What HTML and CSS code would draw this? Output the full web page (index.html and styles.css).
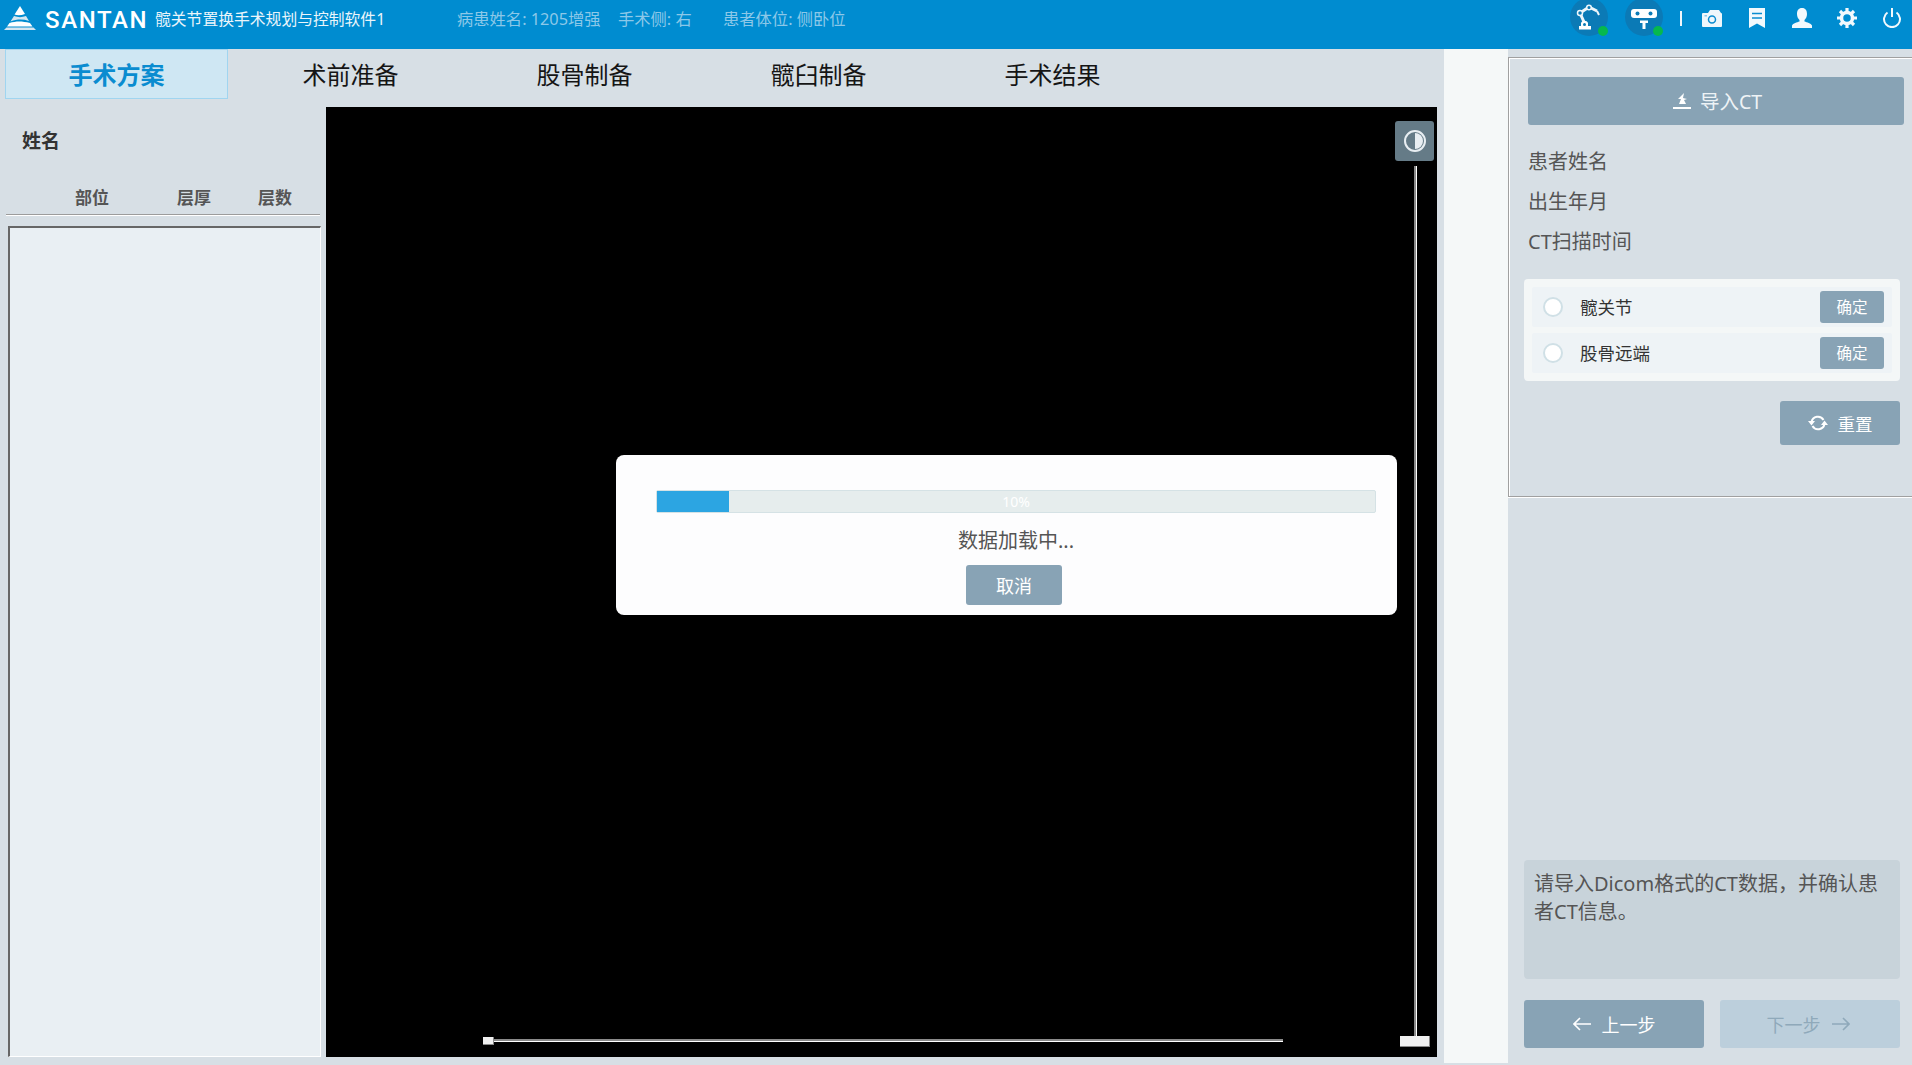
FILE: index.html
```html
<!DOCTYPE html>
<html lang="zh-CN">
<head>
    <meta charset="UTF-8">
    <title>髋关节置换手术规划与控制软件</title>
    <link rel="stylesheet" href="styles.css">
</head>
<body>
<header class="topbar">
    <svg class="logo" viewBox="0 0 32 24">
        <path fill="#fff" d="M16 0 21 8C17 9.500 13 9.500 10.500 8.500Z"/>
        <path fill="#d5e6f0" d="M10 10C14 11.500 18 11.500 22 10L25 15C19 13 13 13 6.500 15.500Z"/>
        <path fill="#fff" d="M5.500 17C12 15 18 15 26 17L28.500 20.500 3 20.500Z"/>
        <path fill="#d5e6f0" d="M2.500 21.500H29.500L32 24H0Z"/>
    </svg>
    <span class="brand">SANTAN</span>
    <span class="app-title">髋关节置换手术规划与控制软件1</span>
    <span class="info info-name">病患姓名: 1205增强</span>
    <span class="info info-side">手术侧: 右</span>
    <span class="info info-pose">患者体位: 侧卧位</span>
    <div class="status">
        <div class="status-circle">
            <svg viewBox="0 0 26 26" width="26" height="26">
                <path fill="none" stroke="#eef6fb" stroke-width="3" d="M8 18 4 9 13 3 21 7"/>
                <path fill="none" stroke="#eef6fb" stroke-width="2" d="M21 7 23 11"/>
                <circle cx="4" cy="9" r="2.500" fill="#0b7ab6" stroke="#eef6fb" stroke-width="1.500"/>
                <circle cx="13" cy="3.500" r="2.300" fill="#0b7ab6" stroke="#eef6fb" stroke-width="1.500"/>
                <path fill="#fff" d="M5 19C6 16 11 16 12 19V22H15V25.500H3V22H5Z"/>
                <circle cx="8.500" cy="20.500" r="1.500" fill="#0b7ab6"/>
            </svg>
            <i class="dot"></i>
        </div>
        <div class="status-circle">
            <svg viewBox="0 0 26 26" width="26" height="26">
                <path fill="#fff" d="M3 5H23Q26 5 26 8V11Q26 14 23 14H3Q0 14 0 11V8Q0 5 3 5Z"/>
                <circle cx="6.500" cy="9.500" r="2" fill="#0b7ab6"/>
                <circle cx="19.500" cy="9.500" r="2" fill="#0b7ab6"/>
                <path fill="#fff" d="M9 16.500H17V19H14.500V25H11.500V19H9Z"/>
            </svg>
            <i class="dot"></i>
        </div>
        <i class="divider"></i>
    </div>
    <div class="tools">
        <svg viewBox="0 0 20 17" width="20" height="17">
            <path fill="#eef7fc" d="M1 3H6L8 0H17L19 3Q20 3 20 4V16Q20 17 19 17H1Q0 17 0 16V4Q0 3 1 3Z"/>
            <circle cx="10" cy="9.500" r="3.500" fill="none" stroke="#0b8cd0" stroke-width="1.500"/>
            <rect x="2.500" y="5" width="2.500" height="1.500" fill="#8cc6e8"/>
        </svg>
        <svg viewBox="0 0 20 20" width="20" height="20">
            <path fill="#f2f9fd" d="M2 0H18V20L10 15.500 2 20Z"/>
            <path fill="none" stroke="#0b8cd0" stroke-width="1.600" d="M5 5.500H15M5 10H15"/>
        </svg>
        <svg viewBox="0 0 20 20" width="20" height="20">
            <path fill="#f2f9fd" d="M10 0C13.500 0 15 2.500 15 6C15 8.500 14 10.500 12.500 12V13.500C15 14.500 19 15 20 17.500V20H0V17.500C1 15 5 14.500 7.500 13.500V12C6 10.500 5 8.500 5 6C5 2.500 6.500 0 10 0Z"/>
        </svg>
        <svg viewBox="0 0 20 20" width="20" height="20">
            <circle cx="10" cy="10" r="5.500" fill="none" stroke="#f2f9fd" stroke-width="3.500"/>
            <path fill="none" stroke="#f2f9fd" stroke-width="3.200" d="M10 0V4M10 16V20M0 10H4M16 10H20M3 3 5.800 5.800M14.200 14.200 17 17M17 3 14.200 5.800M5.800 14.200 3 17"/>
        </svg>
        <svg viewBox="0 0 20 20" width="20" height="20">
            <path fill="none" stroke="#f2f9fd" stroke-width="2" d="M5.500 4.500A8 8 0 1 0 14.500 4.500"/>
            <path fill="none" stroke="#f2f9fd" stroke-width="2" d="M10 0V9"/>
        </svg>
    </div>
</header>

<div class="main">
    <div class="workspace">
        <nav class="tabs">
            <a class="tab active">手术方案</a>
            <a class="tab">术前准备</a>
            <a class="tab">股骨制备</a>
            <a class="tab">髋臼制备</a>
            <a class="tab">手术结果</a>
        </nav>
        <div class="work-row">
            <aside class="sidebar">
                <div class="patient-name">姓名</div>
                <div class="series-head">
                    <span class="col-part">部位</span>
                    <span class="col-thick">层厚</span>
                    <span>层数</span>
                </div>
                <div class="series-list"></div>
            </aside>
            <section class="viewer">
                <button class="contrast">
                    <svg viewBox="0 0 24 24" width="24" height="24">
                        <circle cx="12" cy="12" r="10" fill="none" stroke="#e8eef2" stroke-width="2"/>
                        <path fill="#e8eef2" d="M12 4A8 8 0 0 1 12 20Z"/>
                    </svg>
                </button>
                <div class="slider-v"></div>
                <div class="slider-v-handle"></div>
                <div class="slider-h-handle"></div>
                <div class="slider-h"></div>
                <div class="modal">
                    <div class="progress">
                        <div class="progress-fill"></div>
                        <span class="progress-text">10%</span>
                    </div>
                    <div class="modal-text">数据加载中...</div>
                    <button class="btn btn-cancel">取消</button>
                </div>
            </section>
        </div>
    </div>

    <div class="strip"></div>

    <div class="panel">
        <div class="import-box">
            <button class="btn btn-import">
                <svg viewBox="0 0 18 16" width="18" height="16">
                    <path fill="#fff" d="M11 0 5 6 8 6 6 11H13L11 7 14 6 10 5Z"/>
                    <rect y="14" width="18" height="2" fill="#fff"/>
                </svg>
                导入CT
            </button>
            <div class="field first">患者姓名</div>
            <div class="field">出生年月</div>
            <div class="field">CT扫描时间</div>
            <div class="choice-card">
                <div class="choice">
                    <i class="radio"></i>
                    <span class="choice-name">髋关节</span>
                    <button class="btn btn-ok">确定</button>
                </div>
                <div class="choice">
                    <i class="radio"></i>
                    <span class="choice-name">股骨远端</span>
                    <button class="btn btn-ok">确定</button>
                </div>
            </div>
            <button class="btn btn-reset">
                <svg viewBox="0 0 20 18" width="20" height="18">
                    <path fill="none" stroke="#fff" stroke-width="2" d="M3.500 8A6.500 6.500 0 0 1 15.500 6M16.500 10A6.500 6.500 0 0 1 4.500 12"/>
                    <path fill="#fff" d="M0 7H7L3.500 11.500ZM13 11H20L16.500 6.500Z"/>
                </svg>
                重置
            </button>
        </div>
        <div class="panel-foot">
            <div class="hint">请导入Dicom格式的CT数据，并确认患者CT信息。</div>
            <div class="steps">
                <button class="btn btn-step">
                    <svg viewBox="0 0 18 14" width="18" height="14"><path fill="none" stroke="#fff" stroke-width="1.600" d="M18 7H1M7 1 1 7 7 13"/></svg>
                    上一步
                </button>
                <button class="btn btn-step disabled">
                    下一步
                    <svg viewBox="0 0 18 14" width="18" height="14"><path fill="none" stroke="#8fa9ba" stroke-width="1.600" d="M0 7H17M11 1 17 7 11 13"/></svg>
                </button>
            </div>
        </div>
    </div>
</div>
</body>
</html>
```

FILE: styles.css
```css
*{
    margin: 0;
    padding: 0;
    box-sizing: border-box;
}
html,body{
    width: 100%;
    height: 100%;
    overflow: hidden;
}
body{
    display: flex;
    flex-direction: column;
    background: #d7dfe5;
    font-family: "Noto Sans", "Noto Sans CJK SC", sans-serif;
}
button{
    border: none;
    font-family: inherit;
}

/* top bar */
.topbar{
    height: 49px;
    flex: none;
    display: flex;
    align-items: center;
    padding: 0 10px 13px 4px;
    background: #008cd0;
    overflow: hidden;
}
.logo{
    width: 32px;
    height: 24px;
    flex: none;
}
.brand{
    width: 110px;
    margin-left: 9px;
    padding-top: 4px;
    font-family: "Roboto", sans-serif;
    font-size: 24px;
    font-weight: 500;
    letter-spacing: 1.600px;
    color: #fff;
}
.app-title{
    width: 302px;
    font-size: 15.800px;
    color: #eaf5fb;
}
.info{
    font-size: 16.300px;
    color: #8cc8e8;
}
.info-name{
    width: 161px;
}
.info-side{
    width: 105px;
}
.status{
    margin-left: auto;
    display: flex;
    align-items: center;
    gap: 17px;
}
.status-circle{
    position: relative;
    width: 38px;
    height: 38px;
    border-radius: 50%;
    background: #0b7ab6;
    display: flex;
    align-items: center;
    justify-content: center;
    margin-top: -2px;
}
.dot{
    position: absolute;
    left: 28px;
    top: 28px;
    width: 10px;
    height: 10px;
    border-radius: 50%;
    background: #06b84e;
}
.divider{
    width: 2px;
    height: 15px;
    background: #f0f6fa;
}
.tools{
    margin-left: 20px;
    display: flex;
    align-items: center;
    gap: 25px;
}

/* main */
.main{
    flex: 1;
    display: flex;
    min-height: 0;
}
.workspace{
    width: 1444px;
    display: flex;
    flex-direction: column;
}
.tabs{
    height: 58px;
    flex: none;
    display: flex;
    gap: 11px;
    padding-left: 5px;
}
.tab{
    width: 223px;
    height: 50px;
    padding-bottom: 2px;
    display: flex;
    align-items: center;
    justify-content: center;
    font-size: 24px;
    color: #151515;
}
.tab.active{
    background: #cfe7f3;
    border: 1px solid #a0d5f0;
    color: #0a8cd0;
    font-weight: 700;
}
.work-row{
    height: 950px;
    display: flex;
}

/* left list */
.sidebar{
    width: 326px;
    flex: none;
    padding-top: 21px;
}
.patient-name{
    padding-left: 22px;
    height: 26px;
    line-height: 26px;
    font-size: 19px;
    font-weight: 700;
    color: #333;
}
.series-head{
    display: flex;
    height: 61px;
    margin: 0 6px 0 6px;
    padding: 31px 0 0 69px;
    border-bottom: 1px solid #9c9c9c;
    box-shadow: 0 1px 0 #fff;
    font-size: 17px;
    line-height: 26px;
    font-weight: 700;
    color: #555;
}
.col-part{
    width: 102px;
}
.col-thick{
    width: 81px;
}
.series-list{
    height: 831px;
    width: 313px;
    margin: 11px 0 0 8px;
    background: #e9eff3;
    border-top: 2px solid #666;
    border-left: 2px solid #666;
    border-right: 1px solid #fff;
    border-bottom: 1px solid #fff;
}

/* viewer */
.viewer{
    position: relative;
    width: 1111px;
    flex: none;
    background: #000;
}
.contrast{
    position: absolute;
    left: 1069px;
    top: 14px;
    width: 39px;
    height: 40px;
    border-radius: 3px;
    background: #657b87;
    display: flex;
    align-items: center;
    justify-content: center;
}
.slider-v{
    position: absolute;
    left: 1088px;
    top: 59px;
    width: 3px;
    height: 870px;
    background: #8a8a8a;
    border-right: 1px solid #fff;
}
.slider-v-handle{
    position: absolute;
    left: 1074px;
    top: 929px;
    width: 30px;
    height: 11px;
    background: #f0f0f0;
    border-right: 1px solid #888;
    border-bottom: 1px solid #888;
}
.slider-h-handle{
    position: absolute;
    left: 157px;
    top: 930px;
    width: 11px;
    height: 8px;
    background: #f0f0f0;
    border-right: 1px solid #888;
    border-bottom: 1px solid #888;
}
.slider-h{
    position: absolute;
    left: 168px;
    top: 932px;
    width: 789px;
    height: 3px;
    background: #8a8a8a;
    border-bottom: 1px solid #fff;
}
.modal{
    position: absolute;
    left: 290px;
    top: 348px;
    width: 781px;
    height: 160px;
    padding: 35px 21px 0 40px;
    border-radius: 8px;
    background: #fdfdfe;
    display: flex;
    flex-direction: column;
}
.progress{
    position: relative;
    height: 23px;
    border: 1px solid #d5e2e5;
    border-radius: 2px;
    background: #e6eded;
    text-align: center;
    font-size: 14px;
    line-height: 21px;
    color: #fff;
}
.progress-fill{
    position: absolute;
    left: 0;
    top: 0;
    bottom: 0;
    width: 10%;
    background: #2ca5e2;
}
.progress-text{
    position: relative;
}
.modal-text{
    height: 52px;
    text-align: center;
    line-height: 55px;
    font-size: 20px;
    color: #555;
}
.btn{
    background: #88a3b5;
    color: #fff;
    border-radius: 3px;
}
.btn-cancel{
    width: 96px;
    height: 40px;
    margin-left: 310px;
    padding-bottom: 1px;
    font-size: 18px;
}

/* right */
.strip{
    width: 64px;
    flex: none;
    height: 1014px;
    background: #f5f8f8;
}
.panel{
    width: 404px;
    flex: none;
    padding-top: 8px;
    padding-bottom: 17px;
    display: flex;
    flex-direction: column;
}
.import-box{
    height: 440px;
    padding: 19px 8px 0 15px;
    border: 1px solid #a0a0a0;
    border-right: none;
    box-shadow: inset 1px 1px 0 #fff, 0 1px 0 #fff;
    display: flex;
    flex-direction: column;
}
.btn-import{
    width: 376px;
    height: 48px;
    flex: none;
    margin-left: 4px;
    padding: 0 0 1px 3px;
    display: flex;
    align-items: center;
    justify-content: center;
    gap: 9px;
    font-size: 19.500px;
    color: #eef3f6;
}
.field{
    height: 40px;
    line-height: 40px;
    margin-left: 4px;
    font-size: 20px;
    color: #555;
}
.field.first{
    margin-top: 17px;
}
.choice-card{
    width: 376px;
    margin-top: 17px;
    padding: 8px;
    border-radius: 4px;
    background: #f4f7f7;
    display: flex;
    flex-direction: column;
    gap: 6px;
}
.choice{
    height: 40px;
    display: flex;
    align-items: center;
    padding: 0 8px 0 11px;
    background: #eef3f6;
    border-radius: 2px;
}
.radio{
    width: 20px;
    height: 20px;
    border-radius: 50%;
    background: #fff;
    border: 2px solid #d0e0e6;
}
.choice-name{
    margin-left: 17px;
    padding-bottom: 2px;
    font-size: 17.500px;
    color: #333;
}
.btn-ok{
    margin-left: auto;
    width: 64px;
    height: 32px;
    padding-bottom: 2px;
    font-size: 15.500px;
}
.btn-reset{
    width: 120px;
    height: 44px;
    flex: none;
    margin: 20px 0 0 256px;
    display: flex;
    align-items: center;
    justify-content: center;
    gap: 10px;
    font-size: 17.500px;
}
.panel-foot{
    width: 376px;
    margin: auto 0 0 16px;
}
.hint{
    height: 119px;
    padding: 10px 10px 0;
    border-radius: 4px;
    background: #c8d3da;
    font-size: 20px;
    line-height: 28px;
    color: #555;
}
.steps{
    margin-top: 21px;
    display: flex;
    gap: 16px;
}
.btn-step{
    width: 180px;
    height: 48px;
    display: flex;
    align-items: center;
    justify-content: center;
    gap: 11px;
    font-size: 18px;
}
.btn-step.disabled{
    padding-right: 4px;
    background: #bccfdc;
    color: #8fa9ba;
}
```
